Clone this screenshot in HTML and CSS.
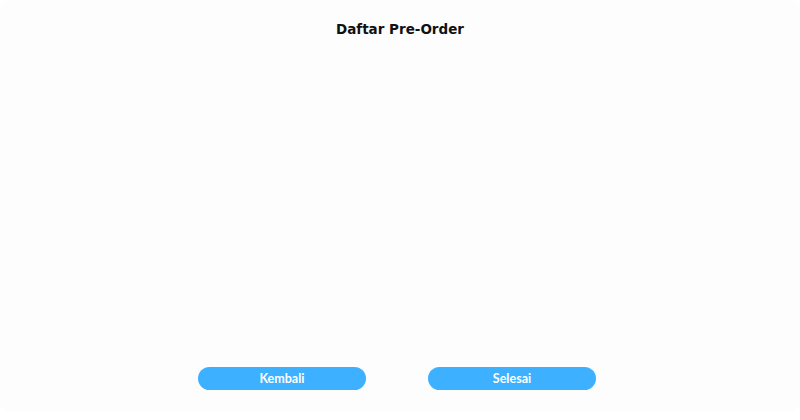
FILE: index.html
```html
<!DOCTYPE html>
<html lang="id">
<head>
<meta charset="utf-8">
<title>Daftar Pre-Order</title>
<link rel="stylesheet" href="styles.css">
</head>
<body>
<div class="card">
  <h1 class="title">Daftar Pre-Order</h1>
  <div class="list"></div>
  <div class="actions">
    <button class="btn">Kembali</button>
    <button class="btn">Selesai</button>
  </div>
</div>
</body>
</html>
```

FILE: styles.css
```css
html, body {
  margin: 0;
  padding: 0;
  background: #ffffff;
}
body {
  width: 800px;
  height: 420px;
  font-family: "DejaVu Sans", "Noto Sans", sans-serif;
}
.card {
  height: 412px;
  background: #fdfdfd;
  border-radius: 10px;
  display: flex;
  flex-direction: column;
  box-sizing: border-box;
}
.title {
  margin: 0;
  padding-top: 20px;
  text-align: center;
  font-size: 13.5px;
  font-weight: bold;
  color: #111111;
  line-height: 18px;
}
.list {
  flex: 1;
}
.actions {
  display: flex;
  justify-content: center;
  gap: 62px;
  padding-right: 6px;
  padding-bottom: 22px;
}
.btn {
  width: 168px;
  height: 23px;
  border: none;
  border-radius: 12px;
  background: #3db1ff;
  color: #ffffff;
  font-family: Lato, "DejaVu Sans", sans-serif;
  font-size: 12.5px;
  font-weight: bold;
  padding: 0;
  cursor: pointer;
}
```
